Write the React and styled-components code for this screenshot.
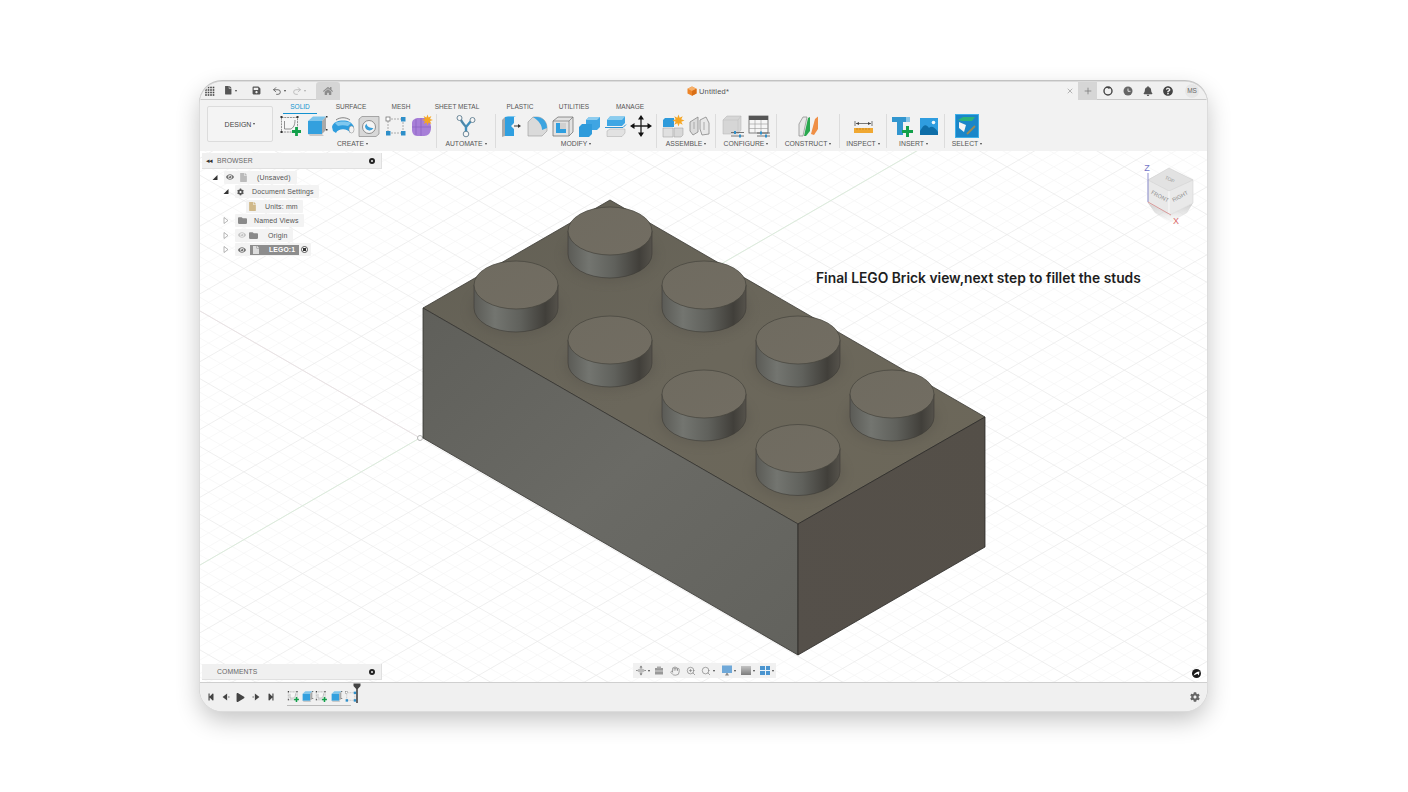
import React from 'react';
import styled, { createGlobalStyle } from 'styled-components';
import { Hand, Search, ZoomIn, Undo2, Redo2, X, Plus } from 'lucide-react';
import { FaHome, FaBell, FaQuestionCircle, FaCog, FaFile, FaSave, FaEye, FaFolder, FaStepBackward, FaStepForward, FaPlay } from 'react-icons/fa';

const GlobalStyle = createGlobalStyle`
  html, body { margin: 0; background: #fff; }
  body { font-family: "Liberation Sans", Arial, sans-serif; color: #555; }
`;

const Page = styled.div`
  width: 1408px;
  height: 792px;
  padding: 82px 0 0 200px;
  box-sizing: border-box;
`;

const Window = styled.div`
  width: 1007px;
  height: 629px;
  display: flex;
  flex-direction: column;
  border-radius: 22px;
  overflow: hidden;
  background: #fff;
  box-shadow: 0 0 0 1px #dcdcdc, 0 -1px 0 1px #c2c2c2, 0 9px 24px rgba(0, 0, 0, 0.24);
`;

/* title bar */
const TitleBar = styled.div`
  height: 18px;
  flex: none;
  display: flex;
  background: #f0f0f0;
`;

const TitleLeft = styled.div`
  width: 116px;
  flex: none;
  display: flex;
  align-items: center;
  padding-left: 5px;
  box-sizing: border-box;
  border-bottom: 1px solid #c9c9c9;
  color: #555;
`;

const TitleTool = styled.span`
  display: inline-flex;
  align-items: center;
  margin-left: ${(p) => p.$left || 0}px;
  color: ${(p) => p.$color || '#555'};
`;

const HomeTab = styled.div`
  width: 24px;
  flex: none;
  display: flex;
  align-items: center;
  justify-content: center;
  background: #d6d6d6;
  color: #8c8c8c;
  border-radius: 3px 3px 0 0;
`;

const ActiveTab = styled.div`
  width: 738px;
  flex: none;
  display: flex;
  align-items: center;
  box-sizing: border-box;
  padding-left: 10px;
  color: #666;
  background: #f2f2f2;
`;

const TabTitle = styled.div`
  flex: 1;
  display: flex;
  align-items: center;
  justify-content: center;
  gap: 2px;
  font-size: 7.5px;
  letter-spacing: 0.2px;
  color: #555;
`;

const CloseButton = styled.span`
  display: inline-flex;
  margin-right: 4px;
  color: #777;
`;

const PlusTab = styled.div`
  width: 19px;
  flex: none;
  display: flex;
  align-items: center;
  justify-content: center;
  background: #d6d6d6;
  color: #777;
`;

const TitleRight = styled.div`
  flex: 1;
  display: flex;
  align-items: center;
  padding-left: 6px;
  gap: 10px;
  border-bottom: 1px solid #c9c9c9;
  color: #555;
`;

const Avatar = styled.div`
  width: 14px;
  height: 14px;
  margin-left: 2px;
  border-radius: 50%;
  background: #e6e6e6;
  font-size: 6.5px;
  line-height: 14px;
  text-align: center;
  color: #666;
`;

/* ribbon */
const Ribbon = styled.div`
  height: 51px;
  flex: none;
  display: flex;
  background: #f2f2f2;
  padding-left: 7px;
`;

const DesignButton = styled.div`
  width: 66px;
  height: 36px;
  margin: 6px 6px 0 0;
  display: flex;
  align-items: center;
  justify-content: center;
  box-sizing: border-box;
  background: #f4f4f4;
  border: 1px solid #dcdcdc;
  border-radius: 2px;
  font-size: 7px;
  color: #444;
`;

const RibbonBody = styled.div`
  display: flex;
  flex-direction: column;
`;

const Tabs = styled.div`
  height: 14px;
  display: flex;
  padding-left: 4px;
`;

const Tab = styled.div`
  width: ${(p) => p.$w}px;
  box-sizing: border-box;
  padding-top: 3px;
  text-align: center;
  font-size: 6.5px;
  color: ${(p) => (p.$active ? '#1492d0' : '#555')};
  border-bottom: ${(p) => (p.$active ? '1px solid #1492d0' : 'none')};
`;

const Groups = styled.div`
  display: flex;
  height: 34px;
`;

const Group = styled.div`
  width: ${(p) => p.$w}px;
  box-sizing: border-box;
  padding-right: ${(p) => p.$pr || 0}px;
  border-right: 1px solid ${(p) => (p.$last ? 'transparent' : '#dcdcdc')};
  display: flex;
  flex-direction: column;
  align-items: center;
`;

const IconRow = styled.div`
  display: flex;
  height: 23px;
  align-items: center;
  gap: 2px;
`;

const GroupLabel = styled.div`
  margin-top: 2px;
  padding-right: ${(p) => p.$pr || 0}px;
  font-size: 6.8px;
  line-height: 9px;
  white-space: nowrap;
  color: #555;
`;

const Caret = styled.span`
  display: inline-block;
  width: 0;
  height: 0;
  margin-left: ${(p) => p.$left ?? 2}px;
  vertical-align: middle;
  border-left: 1.7px solid transparent;
  border-right: 1.7px solid transparent;
  border-top: 2.2px solid ${(p) => p.$color || '#444'};
`;

/* viewport */
const Viewport = styled.div`
  flex: 1;
  position: relative;
  min-height: 0;
  background: #fff;
`;

const Scene = styled.svg`
  position: absolute;
  inset: 0;
  display: block;
`;

const Note = styled.div`
  position: absolute;
  left: 616px;
  top: 118px;
  font-family: Inter, "Liberation Sans", sans-serif;
  font-size: 13.8px;
  font-weight: 600;
  line-height: 18px;
  color: #1e1e1e;
  white-space: nowrap;
`;

const SidePanel = styled.div`
  position: absolute;
  left: 2px;
  top: ${(p) => p.$top}px;
  width: 180px;
`;

const PanelHeader = styled.div`
  height: 16px;
  display: flex;
  align-items: center;
  box-sizing: border-box;
  padding: 0 6px 0 ${(p) => p.$pad}px;
  background: #f0f0f0;
  border-right: 1px solid #e0e0e0;
  border-bottom: 1px solid #e0e0e0;
  font-size: 6.8px;
  color: #666;
`;

const HeaderName = styled.span`
  flex: 1;
  letter-spacing: 0.1px;
`;

const BackArrows = styled.span`
  font-size: 7px;
  color: #333;
  margin-right: 5px;
  letter-spacing: -1px;
`;

const PanelDot = styled.span`
  width: 6px;
  height: 6px;
  border-radius: 50%;
  box-sizing: border-box;
  background: radial-gradient(circle, #bbb 0 0.8px, #222 1px);
`;

const Tree = styled.div`
  padding-top: 1px;
`;

const TreeRow = styled.div`
  height: 14.5px;
  display: flex;
  align-items: center;
  padding-left: ${(p) => p.$indent}px;
`;

const Arrow = styled.span`
  width: 13px;
  flex: none;
  display: flex;
  padding-left: 1px;
  box-sizing: border-box;
`;

const Pill = styled.div`
  height: 13px;
  display: flex;
  align-items: center;
  padding: 0 ${(p) => p.$right || 5}px 0 2px;
  background: #f3f3f3;
  border-radius: 1px;
  font-size: 7px;
  letter-spacing: 0.15px;
  color: #555;
  white-space: nowrap;
`;

const NodeIcon = styled.span`
  display: inline-flex;
  align-items: center;
  justify-content: center;
  width: ${(p) => p.$w}px;
  flex: none;
  color: ${(p) => p.$color || '#777'};
`;

const NodeName = styled.span`
  margin-left: ${(p) => p.$left || 0}px;
`;

const ActiveNode = styled.span`
  display: inline-flex;
  align-items: center;
  height: 10px;
  width: 49px;
  background: #8d8d8d;
  color: #fff;
  font-weight: 700;
  font-size: 6.8px;
`;

const RadioDot = styled.span`
  width: 7px;
  height: 7px;
  margin-left: 2px;
  box-sizing: border-box;
  border-radius: 50%;
  border: 1px solid #555;
  background: radial-gradient(circle, #333 0 1.6px, #fff 1.7px);
`;

const NavBar = styled.div`
  position: absolute;
  left: 433px;
  bottom: 4px;
  width: 143px;
  height: 15px;
  display: flex;
  align-items: center;
  padding-left: 3px;
  box-sizing: border-box;
  background: #f1f1f1;
  color: #777;
`;

const NavItem = styled.span`
  display: inline-flex;
  align-items: center;
  width: ${(p) => p.$w}px;
  flex: none;
`;

const Cube = styled.svg`
  position: absolute;
  left: 935px;
  top: 10px;
`;

const Brand = styled.svg`
  position: absolute;
  right: 6px;
  bottom: 4px;
`;

/* timeline */
const Timeline = styled.div`
  height: 29px;
  flex: none;
  display: flex;
  align-items: center;
  box-sizing: border-box;
  padding: 0 7px 0 3px;
  background: #f0f0f0;
  border-top: 1px solid #cfcfcf;
  color: #444;
`;

const Controls = styled.div`
  display: flex;
  align-items: center;
`;

const ControlButton = styled.span`
  width: 15px;
  display: inline-flex;
  justify-content: center;
  color: #444;
`;

const Features = styled.div`
  position: relative;
  display: flex;
  margin-left: 8px;
  padding-bottom: 2px;
  &::after {
    content: '';
    position: absolute;
    left: 1px;
    right: 6px;
    bottom: -1px;
    height: 3px;
    border-bottom: 1px solid #bbb;
  }
`;

const FeatureCell = styled.span`
  width: 14.3px;
  display: inline-flex;
  justify-content: center;
`;

const Marker = styled.svg`
  position: absolute;
  left: 67px;
  top: -7px;
`;

const GearButton = styled.span`
  margin-left: auto;
  display: inline-flex;
  color: #666;
`;

/* drawn icons */
const SketchIcon = ({ size = 24 }) => (
  <svg width={size} height={size} viewBox="0 0 24 24">
    <rect x="2.5" y="3.5" width="16" height="14.5" fill="#f6f6f6" stroke="#666" strokeWidth="0.7" strokeDasharray="2 0.8" />
    <path d="M5.5 7v8h6c3 -1 4.5 -4 4.5 -9" fill="none" stroke="#666" strokeWidth="0.7" />
    <path d="M1.5 2h2v2h-2zM17.5 2h2v2h-2zM1.5 17h2v2h-2z" fill="#333" />
    <path d="M17.5 13v9M13 17.5h9" stroke="#12a04a" strokeWidth="2.8" />
  </svg>
);

const ExtrudeIcon = ({ size = 24 }) => (
  <svg width={size} height={size} viewBox="0 0 24 24">
    <path d="M3 7L8 2.5H21L17 7Z" fill="#7dc5ec" />
    <path d="M3 7H17V20H3Z" fill="#33a0de" />
    <path d="M17 7L21 2.5V16L17 20Z" fill="#a9a9a9" />
    <path d="M3 20H17L19 22H5Z" fill="#c9c9c9" />
    <path d="M21 2h1.5v1.5H21zM21 15h1.5v1.5H21z" fill="#333" />
  </svg>
);

const RevolveIcon = () => (
  <svg width="24" height="24" viewBox="0 0 24 24">
    <path d="M5 6C9 3 15 3 19 6" fill="none" stroke="#666" strokeWidth="0.8" />
    <path d="M1 13C2 8 7 6.5 12 6.5S21 8 23 13L19 19C17 14 7 14 5 19L2 17Z" fill="#2f9ddd" />
    <path d="M4 9C8 7 16 7 20 9L17 12C13 11 10 11 7 12Z" fill="#7fc8ef" />
    <ellipse cx="20.5" cy="15.5" rx="2.5" ry="3.5" fill="#f3f3f3" stroke="#888" strokeWidth="0.5" />
  </svg>
);

const HoleIcon = () => (
  <svg width="24" height="24" viewBox="0 0 24 24">
    <path d="M2 5L5 2.5H22V20L19 22.5H2Z" fill="#d8d8d8" stroke="#8a8a8a" strokeWidth="0.7" />
    <circle cx="12" cy="13" r="6.5" fill="#f4f4f4" stroke="#777" strokeWidth="0.8" />
    <path d="M8 12A4.5 4.5 0 0 0 16.5 14C13 14 10 13 9.5 9.5Z" fill="#3a9fd9" />
  </svg>
);

const PatternIcon = ({ size = 24 }) => (
  <svg width={size} height={size} viewBox="0 0 24 24">
    <path d="M5 5H20V19H5Z" fill="none" stroke="#999" strokeWidth="0.8" strokeDasharray="2 1" />
    <rect x="3" y="3" width="4" height="4" fill="#fff" stroke="#666" strokeWidth="0.7" />
    <rect x="18" y="3" width="4.5" height="4.5" fill="#2e8fc9" />
    <rect x="3" y="17" width="4.5" height="4.5" fill="#2e8fc9" />
    <rect x="18" y="17" width="4.5" height="4.5" fill="#2e8fc9" />
  </svg>
);

const Star = ({ cx, cy, r = 4.5, color = '#f5a623' }) => (
  <path
    d={Array.from({ length: 16 }, (_, i) => {
      const a = (i * Math.PI) / 8;
      const len = i % 2 ? r * 0.5 : r;
      return `${i ? 'L' : 'M'}${cx + len * Math.cos(a)} ${cy + len * Math.sin(a)}`;
    }).join('') + 'Z'}
    fill={color}
  />
);

const FormIcon = () => (
  <svg width="24" height="24" viewBox="0 0 24 24">
    <path d="M3 9C3 6 6 4 10 4H16C20 5 22 9 22 14C22 19 19 22 15 22H8C5 22 3 19 3 16Z" fill="#a77fd8" />
    <path d="M3 13H22M12 4V22M7 5V21" stroke="#8a61c2" strokeWidth="0.7" fill="none" />
    <Star cx={18.5} cy={6} r={5.5} />
  </svg>
);

const AutomateIcon = () => (
  <svg width="24" height="24" viewBox="0 0 24 24">
    <path d="M6 4C8 9 10 10 12 13L17 7M12 13V19" fill="none" stroke="#3f8fbc" strokeWidth="2.4" />
    <path d="M6 4C8 9 10 10 12 13" fill="none" stroke="#71777c" strokeWidth="0.6" />
    <circle cx="5.5" cy="4" r="2.5" fill="#f6f6f6" stroke="#5f7d90" strokeWidth="0.9" />
    <circle cx="18.5" cy="6" r="2.5" fill="#f6f6f6" stroke="#5f7d90" strokeWidth="0.9" />
    <circle cx="12" cy="20" r="2.8" fill="#f6f6f6" stroke="#5f7d90" strokeWidth="0.9" />
  </svg>
);

const PressPullIcon = () => (
  <svg width="24" height="24" viewBox="0 0 24 24">
    <path d="M3 6L6 3V22L3 23Z" fill="#aaa" />
    <path d="M6 3H15V9L12 12L15 15V22H6Z" fill="#2f9fe0" />
    <path d="M6 3L9 2H17L15 3Z" fill="#7cc6ee" />
    <path d="M15 12H20" stroke="#333" strokeWidth="1" />
    <path d="M19 10L22 12L19 14Z" fill="#333" />
  </svg>
);

const FilletIcon = () => (
  <svg width="24" height="24" viewBox="0 0 24 24">
    <path d="M3 8L8 3H12C18 3 22 8 22 14V17L17 22H3Z" fill="#dadada" stroke="#999" strokeWidth="0.6" />
    <path d="M8 3H12C18 3 22 8 22 14L17 16C17 11 14 7 8 3Z" fill="#3ca4e0" />
  </svg>
);

const ShellIcon = () => (
  <svg width="24" height="24" viewBox="0 0 24 24">
    <path d="M2 7L7 3H22V18L18 22H2Z" fill="#e2e2e2" stroke="#777" strokeWidth="0.8" />
    <path d="M5 9H15V19H5Z" fill="#2f9fe0" />
    <path d="M9 9H15V15H9Z" fill="#d0d0d0" />
    <path d="M2 7H18V22M18 7L22 3" fill="none" stroke="#777" strokeWidth="0.7" />
  </svg>
);

const CombineIcon = () => (
  <svg width="24" height="24" viewBox="0 0 24 24">
    <path d="M9 6L12 3H23V13L20 16H9Z" fill="#3fa5e3" />
    <path d="M2 13L5 10H15V20L12 23H2Z" fill="#2f9bdb" />
    <path d="M9 6H20L23 3H12Z" fill="#8fcdef" />
  </svg>
);

const OffsetIcon = () => (
  <svg width="24" height="24" viewBox="0 0 24 24">
    <path d="M4 6L7 2.5H22V9L19 12H4Z" fill="#3ea6e4" />
    <path d="M4 6H19L22 2.5H7Z" fill="#8bcdef" />
    <path d="M2 13.5H20L23 10.5" fill="none" stroke="#2e93d3" strokeWidth="1" />
    <path d="M4 17L7 15H22V19L19 22.5H4Z" fill="#e2e2e2" stroke="#a9a9a9" strokeWidth="0.5" />
  </svg>
);

const MoveIcon = () => (
  <svg width="24" height="24" viewBox="0 0 24 24">
    <path d="M12 4V20M4 12H20" stroke="#222" strokeWidth="1.3" />
    <path d="M12 1L15 5.5H9ZM12 23L9 18.5H15ZM1 12L5.5 9V15ZM23 12L18.5 15V9Z" fill="#111" />
  </svg>
);

const AssembleIcon = () => (
  <svg width="24" height="24" viewBox="0 0 24 24">
    <path d="M2 6L4 4H13V13H2Z" fill="#2f9bdb" />
    <path d="M2 14H12V23H2Z" fill="#e0e0e0" stroke="#9a9a9a" strokeWidth="0.5" />
    <path d="M13 14H22V21L20 23H13Z" fill="#d8d8d8" stroke="#9a9a9a" strokeWidth="0.5" />
    <Star cx={17.5} cy={6.5} r={6} />
  </svg>
);

const JointIcon = () => (
  <svg width="24" height="24" viewBox="0 0 24 24">
    <path d="M3 8L11 3V18L6 21L3 17Z" fill="#dcdcdc" stroke="#888" strokeWidth="0.8" />
    <path d="M13 6L19 3L22 9V20L15 21L13 15Z" fill="#e8e8e8" stroke="#888" strokeWidth="0.8" />
    <path d="M7 8V15M17 8V16" stroke="#aaa" strokeWidth="1" />
  </svg>
);

const ConfigBoxIcon = () => (
  <svg width="24" height="24" viewBox="0 0 24 24">
    <path d="M2 6L6 2H20V16L17 20H2Z" fill="#d6d6d6" stroke="#b3b3b3" strokeWidth="0.5" />
    <path d="M2 6H17V20M17 6L20 2" fill="none" stroke="#bdbdbd" strokeWidth="0.5" />
    <path d="M10 18.5H23M10 22H23" stroke="#555" strokeWidth="0.8" />
    <path d="M13 17h2v3h-2z" fill="#2f8fc9" />
    <path d="M18 20.5h2v3h-2z" fill="#2f8fc9" />
  </svg>
);

const ConfigTableIcon = () => (
  <svg width="24" height="24" viewBox="0 0 24 24">
    <rect x="2" y="2" width="19" height="17" fill="#f6f6f6" stroke="#666" strokeWidth="0.8" />
    <rect x="2" y="2" width="19" height="4" fill="#555" />
    <path d="M2 10H21M2 14.5H21M8 6V19M14 6V19" stroke="#999" strokeWidth="0.6" />
    <path d="M10 19H23M10 22H23" stroke="#555" strokeWidth="0.8" />
    <path d="M13 17.5h2v3h-2z" fill="#2f8fc9" />
    <path d="M18 20.5h2v3h-2z" fill="#2f8fc9" />
  </svg>
);

const ConstructIcon = () => (
  <svg width="24" height="24" viewBox="0 0 24 24">
    <path d="M3 10L7 3H11L7 22H3Z" fill="#e8e8e8" stroke="#888" strokeWidth="0.7" />
    <path d="M8 22L12 4L14 3V17L10 22Z" fill="#2aa84f" />
    <path d="M15 20L19 5L22 2.5V15L18 21Z" fill="#ef8f45" />
  </svg>
);

const InspectIcon = () => (
  <svg width="24" height="24" viewBox="0 0 24 24">
    <path d="M4 7V12M21 7V12M5 9.5H20" stroke="#444" strokeWidth="0.7" />
    <path d="M5 9.5L8 8V11ZM20 9.5L17 8V11Z" fill="#444" />
    <rect x="3" y="14" width="19" height="5" fill="#f0a832" />
    <path d="M6 14v2M9 14v2M12 14v2M15 14v2M18 14v2" stroke="#a96f12" strokeWidth="0.5" />
  </svg>
);

const InsertDerivedIcon = () => (
  <svg width="24" height="24" viewBox="0 0 24 24">
    <path d="M1 3H17V8H12V21H6V8H1Z" fill="#3296cf" />
    <rect x="15" y="3" width="4" height="5" fill="#86c5e8" />
    <path d="M16.5 12V23M11 17.5H22" stroke="#12a04a" strokeWidth="3" />
  </svg>
);

const InsertImageIcon = () => (
  <svg width="24" height="24" viewBox="0 0 24 24">
    <rect x="3" y="4" width="18" height="17" fill="#2f9ddf" />
    <circle cx="16.5" cy="8.5" r="1.8" fill="#f4f9fb" />
    <path d="M3 17C7 10 9 10 12 14C14 12 17 12 21 18V21H3Z" fill="#0f6ea8" />
  </svg>
);

const SelectIcon = () => (
  <svg width="24" height="24" viewBox="0 0 24 24">
    <rect x="0.5" y="0.5" width="23" height="23" fill="#1a86c9" stroke="#3fb0e8" />
    <path d="M3 6L8 3H20L17 7H7Z" fill="#2bb37a" />
    <path d="M4 8L11 11L9 18L4 14Z" fill="#f4f4f4" />
    <path d="M12 20L20 12" stroke="#9a8a55" strokeWidth="1.8" />
  </svg>
);

const Eye = ({ faded }) => <FaEye size={8} color={faded ? '#c6c6c6' : '#777'} />;

const TreeTriangle = ({ open }) => (
  <svg width="6" height="7" viewBox="0 0 6 7">
    {open ? <path d="M0.5 6L5.5 6L5.5 1Z" fill="#333" /> : <path d="M1 0.5L5 3.5L1 6.5Z" fill="#fff" stroke="#888" strokeWidth="0.6" />}
  </svg>
);

const CubeLogo = () => (
  <svg width="10" height="10" viewBox="0 0 10 10">
    <path d="M5 0.5L9.5 2.7V7.5L5 9.7L0.5 7.5V2.7Z" fill="#ee8427" />
    <path d="M5 0.5L9.5 2.7L5 5L0.5 2.7Z" fill="#f6b06a" />
    <path d="M5 5L9.5 2.7V7.5L5 9.7Z" fill="#d96f17" />
  </svg>
);

const GroupsData = [
  { label: 'CREATE', w: 158, pr: 4, labelPr: 6, icons: [SketchIcon, ExtrudeIcon, RevolveIcon, HoleIcon, PatternIcon, FormIcon] },
  { label: 'AUTOMATE', w: 59, icons: [AutomateIcon] },
  { label: 'MODIFY', w: 161, icons: [PressPullIcon, FilletIcon, ShellIcon, CombineIcon, OffsetIcon, MoveIcon] },
  { label: 'ASSEMBLE', w: 59, icons: [AssembleIcon, JointIcon] },
  { label: 'CONFIGURE', w: 61, icons: [ConfigBoxIcon, ConfigTableIcon] },
  { label: 'CONSTRUCT', w: 63, icons: [ConstructIcon] },
  { label: 'INSPECT', w: 47, icons: [InspectIcon] },
  { label: 'INSERT', w: 58, labelPr: 4, icons: [InsertDerivedIcon, InsertImageIcon] },
  { label: 'SELECT', w: 45, last: true, icons: [SelectIcon] },
];

const TabsData = [
  { name: 'SOLID', w: 34, active: true },
  { name: 'SURFACE', w: 68 },
  { name: 'MESH', w: 32 },
  { name: 'SHEET METAL', w: 80 },
  { name: 'PLASTIC', w: 46 },
  { name: 'UTILITIES', w: 62 },
  { name: 'MANAGE', w: 50 },
];

/* scene geometry, in page coordinates */
const origin = [420, 438];
const majorStep = [58.7, 33.9];
const MAJOR = '#ebebeb';
const MINOR = '#f6f6f6';

const gridLines = () => {
  const lines = [];
  const [sx, sy] = majorStep;
  for (let k = -100; k <= 100; k++) {
    const off = k / 5;
    const stroke = k % 5 === 0 ? MAJOR : MINOR;
    lines.push({ x1: origin[0] + off * sx - sx * 30, y1: origin[1] - off * sy - sy * 30, x2: origin[0] + off * sx + sx * 30, y2: origin[1] - off * sy + sy * 30, stroke });
    lines.push({ x1: origin[0] + off * sx - sx * 30, y1: origin[1] + off * sy + sy * 30, x2: origin[0] + off * sx + sx * 30, y2: origin[1] + off * sy - sy * 30, stroke });
  }
  return lines.sort((a, b) => (a.stroke === MAJOR ? 1 : 0) - (b.stroke === MAJOR ? 1 : 0));
};

const studs = [
  [610, 231], [516, 285], [704, 285], [610, 340],
  [798, 340], [704, 394], [892, 394], [798, 448.5],
];

const Stud = ({ x, y }) => (
  <g>
    <ellipse cx={x} cy={y + 24} rx="47" ry="28" fill="#4f4c44" opacity="0.25" filter="url(#soft)" />
    <path d={`M${x - 42} ${y}V${y + 23}A42 24 0 0 0 ${x + 42} ${y + 23}V${y}Z`} fill="url(#studSide)" stroke="#3d3b36" strokeWidth="0.6" />
    <ellipse cx={x} cy={y} rx="42" ry="24" fill="url(#studTop)" stroke="#45433c" strokeWidth="0.7" />
  </g>
);

const BrickScene = () => (
  <Scene width="1007" height="531" viewBox="200 151 1007 531">
    <defs>
      <linearGradient id="studSide" x1="0" x2="1" y1="0" y2="0">
        <stop offset="0" stopColor="#5b5b56" />
        <stop offset="0.25" stopColor="#737570" />
        <stop offset="0.55" stopColor="#60615c" />
        <stop offset="0.85" stopColor="#413f3a" />
        <stop offset="1" stopColor="#55524b" />
      </linearGradient>
      <linearGradient id="studTop" x1="0" x2="1" y1="0" y2="1">
        <stop offset="0" stopColor="#6f6b60" />
        <stop offset="1" stopColor="#726d62" />
      </linearGradient>
      <linearGradient id="leftFace" x1="0" x2="1" y1="0" y2="1">
        <stop offset="0" stopColor="#5f5f5a" />
        <stop offset="0.5" stopColor="#6a6a65" />
        <stop offset="1" stopColor="#62625d" />
      </linearGradient>
      <linearGradient id="rightFace" x1="0" x2="1" y1="1" y2="0">
        <stop offset="0" stopColor="#55504a" />
        <stop offset="1" stopColor="#544f48" />
      </linearGradient>
      <linearGradient id="topFace" x1="0" x2="1" y1="0" y2="1">
        <stop offset="0" stopColor="#625f54" />
        <stop offset="0.5" stopColor="#6b675b" />
        <stop offset="1" stopColor="#6c6759" />
      </linearGradient>
      <filter id="soft" x="-30%" y="-30%" width="160%" height="160%">
        <feGaussianBlur stdDeviation="5" />
      </filter>
    </defs>
    {gridLines().map((l, i) => (
      <line key={i} {...l} strokeWidth="0.8" />
    ))}
    <line x1="200" y1="311" x2="420" y2="438" stroke="#e9e2e4" strokeWidth="1" />
    <line x1="200" y1="565" x2="920" y2="149" stroke="#dcecdc" strokeWidth="1" />
    <circle cx="420" cy="438" r="2.5" fill="#fff" stroke="#b5b5b5" strokeWidth="1" />
    <path d="M423 308L610 200L985 417L798 524Z" fill="url(#topFace)" stroke="#3b3a35" strokeWidth="0.8" />
    <path d="M423 308L798 524V655L423 438Z" fill="url(#leftFace)" stroke="#33322e" strokeWidth="0.8" />
    <path d="M798 524L985 417V547L798 655Z" fill="url(#rightFace)" stroke="#2b2a27" strokeWidth="0.8" />
    {studs.map(([x, y]) => (
      <Stud key={`${x}-${y}`} x={x} y={y} />
    ))}
  </Scene>
);

const ViewCube = () => (
  <Cube width="62" height="66" viewBox="0 0 62 66">
    <defs>
      <linearGradient id="cubeShade" x1="0" x2="0" y1="0" y2="1">
        <stop offset="0" stopColor="#c8c8c8" stopOpacity="0.9" />
        <stop offset="1" stopColor="#cfcfcf" stopOpacity="0" />
      </linearGradient>
    </defs>
    <path d="M13 42L35 54L58 42L52 52L35 62L20 52Z" fill="url(#cubeShade)" />
    <path d="M34 8L58 19V42L35 54L13 42V19Z" fill="#e9e9e9" stroke="#d6d6d6" strokeWidth="0.6" />
    <path d="M34 7L58 19L34 30L13 19Z" fill="#e2e2e2" stroke="#d2d2d2" strokeWidth="0.6" />
    <path d="M34 30V54" stroke="#fafafa" strokeWidth="1" />
    <path d="M13 12V41" stroke="#8d8fd0" strokeWidth="1" />
    <path d="M13 41L36 54" stroke="#d99a9a" strokeWidth="1" />
    <text x="12" y="10" textAnchor="middle" fontSize="9" fill="#7575c8">Z</text>
    <text x="41" y="63" textAnchor="middle" fontSize="9" fill="#d96a6a">X</text>
    <text transform="translate(34 20) rotate(25)" textAnchor="middle" fontSize="5" fill="#999">TOP</text>
    <text transform="translate(24 37) rotate(28)" textAnchor="middle" fontSize="5.5" fill="#8c8c8c">FRONT</text>
    <text transform="translate(46 37) rotate(-28)" textAnchor="middle" fontSize="5.5" fill="#8c8c8c">RIGHT</text>
  </Cube>
);

const OrbitIcon = () => (
  <svg width="10" height="11" viewBox="0 0 10 11">
    <path d="M5 0.5L6.5 2.5H3.5ZM5 10.5L3.5 8.5H6.5Z" fill="#777" />
    <path d="M0 5.5H10M5 2V9" stroke="#777" strokeWidth="0.8" />
    <ellipse cx="5" cy="5.5" rx="3.5" ry="2" fill="#bbb" />
  </svg>
);

const LookIcon = () => (
  <svg width="10" height="9" viewBox="0 0 10 9">
    <rect x="1" y="2" width="8" height="6.5" fill="#999" />
    <rect x="3" y="0.5" width="4" height="2" fill="#aaa" />
    <path d="M1 5H9" stroke="#eee" strokeWidth="0.7" />
  </svg>
);

const DisplayIcon = () => (
  <svg width="10" height="11" viewBox="0 0 10 11">
    <rect x="0" y="0.5" width="10" height="7.5" fill="#6fa8d8" />
    <path d="M3 10.5H7L5.5 8H4.5Z" fill="#8a8a8a" />
  </svg>
);

const Swatch = styled.span`
  width: 10px;
  height: 9px;
  display: inline-block;
  background: linear-gradient(#c4c4c4, #7c7c7c);
`;

const GridSwatch = styled(Swatch)`
  background: #4a94cf;
  background-image: linear-gradient(#e8f2f9, #e8f2f9), linear-gradient(#e8f2f9, #e8f2f9);
  background-size: 100% 1px, 1px 100%;
  background-position: center;
  background-repeat: no-repeat;
`;

const StepIcon = ({ flip }) => (
  <svg width="8" height="8" viewBox="0 0 7 7" style={{ transform: flip ? 'scaleX(-1)' : undefined }}>
    <path d="M0.5 3h1v1h-1z" fill="#444" />
    <path d="M2.5 0.5L6.5 3.5L2.5 6.5Z" fill="#444" />
  </svg>
);

export default function App() {
  return (
    <Page>
      <GlobalStyle />
      <Window>
        <TitleBar>
          <TitleLeft>
            <svg width="10" height="10" viewBox="0 0 10 10">
              {[1, 3.5, 6, 8.5].flatMap((x) => [1.5, 4, 6.5, 9].map((y) => <rect key={`${x}${y}`} x={x - 0.8} y={y - 0.8} width="1.6" height="1.6" fill="#444" />))}
            </svg>
            <TitleTool $left={9}><FaFile size={8.5} /><Caret /></TitleTool>
            <TitleTool $left={15}><FaSave size={9} /></TitleTool>
            <TitleTool $left={11}><Undo2 size={10} strokeWidth={2} /><Caret /></TitleTool>
            <TitleTool $left={6} $color="#b5b5b5"><Redo2 size={10} strokeWidth={2} /><Caret $color="#aaa" /></TitleTool>
          </TitleLeft>
          <HomeTab><FaHome size={10} /></HomeTab>
          <ActiveTab>
            <TabTitle><CubeLogo /> Untitled*</TabTitle>
            <CloseButton><X size={8} strokeWidth={1.5} /></CloseButton>
          </ActiveTab>
          <PlusTab><Plus size={10} strokeWidth={1.8} /></PlusTab>
          <TitleRight>
            <svg width="10" height="10" viewBox="0 0 10 10">
              <circle cx="5" cy="5" r="4" fill="none" stroke="#444" strokeWidth="1.4" />
              <path d="M3 1L6 3L8 1Z" fill="#444" />
            </svg>
            <svg width="10" height="10" viewBox="0 0 10 10">
              <circle cx="5" cy="5" r="4.5" fill="#666" />
              <path d="M5 2.5V5.3H7.5" fill="none" stroke="#eee" strokeWidth="0.9" />
            </svg>
            <TitleTool><FaBell size={10} /></TitleTool>
            <TitleTool $color="#444"><FaQuestionCircle size={10} /></TitleTool>
            <Avatar>MS</Avatar>
          </TitleRight>
        </TitleBar>

        <Ribbon>
          <DesignButton>DESIGN<Caret /></DesignButton>
          <RibbonBody>
            <Tabs>
              {TabsData.map((t) => (
                <Tab key={t.name} $w={t.w} $active={t.active}>{t.name}</Tab>
              ))}
            </Tabs>
            <Groups>
              {GroupsData.map((g) => (
                <Group key={g.label} $w={g.w} $pr={g.pr} $last={g.last}>
                  <IconRow>
                    {g.icons.map((Icon, i) => <Icon key={i} />)}
                  </IconRow>
                  <GroupLabel $pr={g.labelPr}>{g.label}<Caret /></GroupLabel>
                </Group>
              ))}
            </Groups>
          </RibbonBody>
        </Ribbon>

        <Viewport>
          <BrickScene />
          <Note>Final LEGO Brick view,next step to fillet the studs</Note>

          <SidePanel $top={2}>
            <PanelHeader $pad={4}>
              <BackArrows>◂◂</BackArrows>
              <HeaderName>BROWSER</HeaderName>
              <PanelDot />
            </PanelHeader>
            <Tree>
              <TreeRow $indent={9}>
                <Arrow><TreeTriangle open /></Arrow>
                <Pill $right={6}>
                  <NodeIcon $w={8}><Eye /></NodeIcon>
                  <NodeIcon $w={18}><FaFile size={9} color="#bbb" /></NodeIcon>
                  <NodeName $left={5}>(Unsaved)</NodeName>
                </Pill>
              </TreeRow>
              <TreeRow $indent={20}>
                <Arrow><TreeTriangle open /></Arrow>
                <Pill>
                  <NodeIcon $w={7} $color="#555"><FaCog size={8} /></NodeIcon>
                  <NodeName $left={8}>Document Settings</NodeName>
                </Pill>
              </TreeRow>
              <TreeRow $indent={44}>
                <Pill>
                  <NodeIcon $w={9}><FaFile size={9} color="#d0b98a" /></NodeIcon>
                  <NodeName $left={8}>Units: mm</NodeName>
                </Pill>
              </TreeRow>
              <TreeRow $indent={20}>
                <Arrow><TreeTriangle /></Arrow>
                <Pill>
                  <NodeIcon $w={10}><FaFolder size={9} color="#8a8a8a" /></NodeIcon>
                  <NodeName $left={7}>Named Views</NodeName>
                </Pill>
              </TreeRow>
              <TreeRow $indent={20}>
                <Arrow><TreeTriangle /></Arrow>
                <Pill>
                  <NodeIcon $w={9}><Eye faded /></NodeIcon>
                  <NodeIcon $w={15}><FaFolder size={9} color="#8a8a8a" /></NodeIcon>
                  <NodeName $left={7}>Origin</NodeName>
                </Pill>
              </TreeRow>
              <TreeRow $indent={20}>
                <Arrow><TreeTriangle /></Arrow>
                <Pill $right={3}>
                  <NodeIcon $w={9}><Eye /></NodeIcon>
                  <NodeIcon $w={4} />
                  <ActiveNode>
                    <NodeIcon $w={12}><FaFile size={8} color="#ddd" /></NodeIcon>
                    <NodeName $left={7}>LEGO:1</NodeName>
                  </ActiveNode>
                  <RadioDot />
                </Pill>
              </TreeRow>
            </Tree>
          </SidePanel>

          <SidePanel $top={513}>
            <PanelHeader $pad={15}>
              <HeaderName>COMMENTS</HeaderName>
              <PanelDot />
            </PanelHeader>
          </SidePanel>

          <ViewCube />

          <NavBar>
            <NavItem $w={18}><OrbitIcon /><Caret /></NavItem>
            <NavItem $w={16}><LookIcon /></NavItem>
            <NavItem $w={16}><Hand size={10} strokeWidth={1.5} /></NavItem>
            <NavItem $w={15}><ZoomIn size={10} strokeWidth={1.5} /></NavItem>
            <NavItem $w={21}><Search size={10} strokeWidth={1.5} /><Caret /></NavItem>
            <NavItem $w={19}><DisplayIcon /><Caret /></NavItem>
            <NavItem $w={19}><Swatch /><Caret /></NavItem>
            <NavItem $w={14}><GridSwatch /><Caret /></NavItem>
          </NavBar>

          <Brand width="9" height="9" viewBox="0 0 9 9">
            <circle cx="4.5" cy="4.5" r="4.5" fill="#1a1a1a" />
            <path d="M1.5 6.5C3 3.5 5 2.5 7.5 2.5L6.8 6.5L5.5 4.8Z" fill="#fff" />
          </Brand>
        </Viewport>

        <Timeline>
          <Controls>
            <ControlButton><FaStepBackward size={8} /></ControlButton>
            <ControlButton><StepIcon flip /></ControlButton>
            <ControlButton><FaPlay size={9} /></ControlButton>
            <ControlButton><StepIcon /></ControlButton>
            <ControlButton><FaStepForward size={8} /></ControlButton>
          </Controls>
          <Features>
            <FeatureCell><SketchIcon size={13} /></FeatureCell>
            <FeatureCell><ExtrudeIcon size={13} /></FeatureCell>
            <FeatureCell><SketchIcon size={13} /></FeatureCell>
            <FeatureCell><ExtrudeIcon size={13} /></FeatureCell>
            <FeatureCell><PatternIcon size={13} /></FeatureCell>
            <Marker width="8" height="20" viewBox="0 0 8 20">
              <path d="M0.5 0.5H7.5V3L4.8 6V20H3.2V6L0.5 3Z" fill="#444" />
            </Marker>
          </Features>
          <GearButton><FaCog size={10} /></GearButton>
        </Timeline>
      </Window>
    </Page>
  );
}
